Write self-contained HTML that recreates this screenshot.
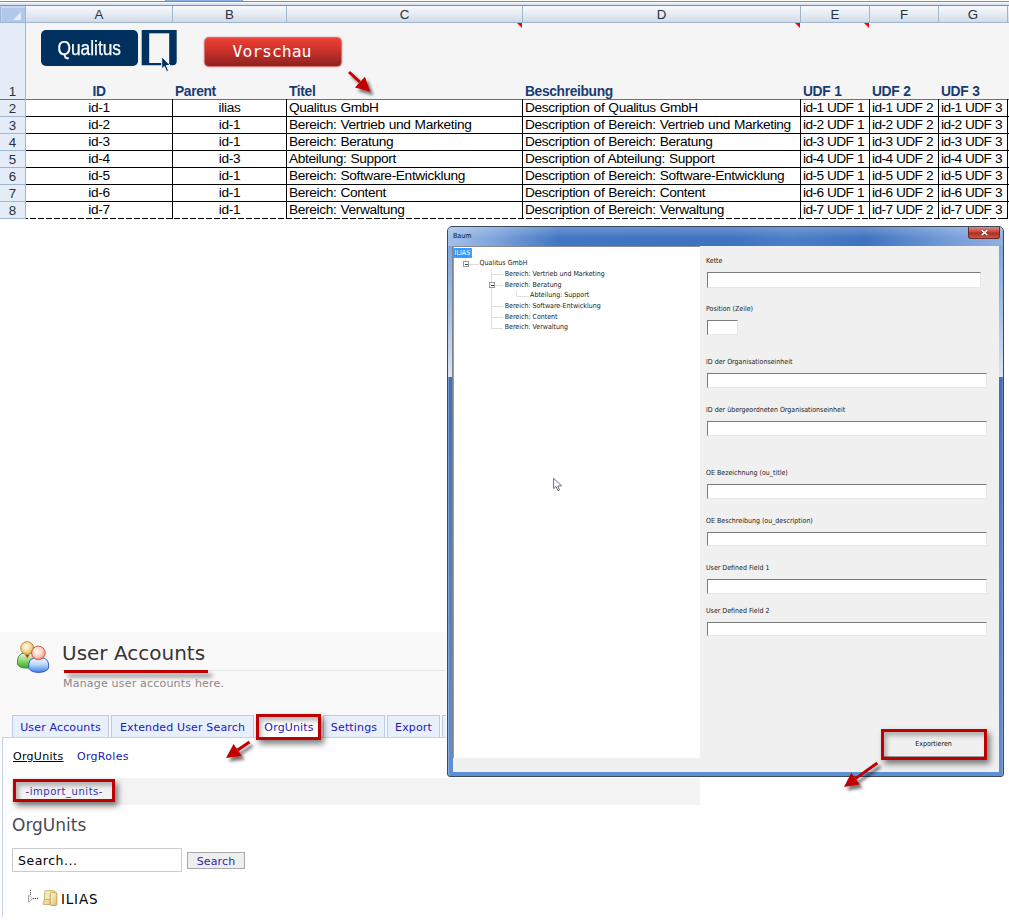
<!DOCTYPE html>
<html lang="de">
<head>
<meta charset="utf-8">
<title>OrgUnits Import</title>
<style>
*{box-sizing:border-box;margin:0;padding:0}
html,body{width:1009px;height:922px;overflow:hidden;background:#fff}
body{position:relative;font-family:"Liberation Sans",sans-serif;font-size:14px;color:#000}
.abs{position:absolute}
svg{display:block;overflow:visible}
/* ---------- spreadsheet ---------- */
#sheet{position:absolute;left:0;top:0;width:1009px;height:222px}
#topstrip{position:absolute;left:0;top:0;width:1009px;height:6px;background:linear-gradient(#fff 0 1px,#6a8cb8 1px 2px,#fff 2px 3px,#d6e6f8 3px 5px,#7391bb 5px 6px)}
#topstrip i{position:absolute;left:165px;top:0;width:78px;height:1px;background:#8db0e2;border-left:1px solid #7f9dc4;border-right:1px solid #7f9dc4}
#topstrip b{display:none}
#colhead{position:absolute;left:0;top:6px;width:1009px;height:17px;background:linear-gradient(#f7f9fc,#e6ebf3 50%,#d3dbe9);border-bottom:1px solid #9eb6ce}
.ch{position:absolute;top:0;height:16px;border-right:1px solid #9eb6ce;text-align:center;font-size:13.33px;line-height:17px;color:#27313f}
#corner{position:absolute;left:0;top:6px;width:26px;height:17px;background:#b1c8ea;border-right:1px solid #9eb6ce;border-bottom:1px solid #9eb6ce;border-top:1px solid #c8d8f0;box-shadow:inset 1px 0 0 #9eb6ce,inset 2px 1px 0 #c4d6f1}
#rowhead{position:absolute;left:0;top:23px;width:26px;height:196px;border-bottom:1px solid #9eb6ce;background:#e4ecf7;border-right:1px solid #9eb6ce}
.rh{position:absolute;left:0;width:25px;text-align:center;font-size:13.33px;line-height:15px;color:#27313f}
#r1{position:absolute;left:26px;top:23px;width:983px;height:76px;background:#f5f5f5}
.hd{position:absolute;top:83.5px;font-weight:bold;font-size:13.8px;letter-spacing:-0.35px;word-spacing:.5px;line-height:16px;color:#1a3a72;white-space:nowrap}
.cell{position:absolute;height:16px;font-size:13.7px;letter-spacing:-0.35px;word-spacing:.55px;line-height:15px;white-space:nowrap;overflow:hidden;background:#fff}
.hl{position:absolute;left:26px;width:983px;height:1px;background:#000}
.dl{position:absolute;left:26px;width:982px;height:1px;background:repeating-linear-gradient(90deg,#000 0 6px,transparent 6px 8px);background-position:-4px 0}
.vl{position:absolute;top:99px;width:1px;height:120px;background:#000}
#qlogo{position:absolute;left:41px;top:30px;width:97px;height:36px;background:#00305e;border-radius:5px;color:#fff;font-size:20.3px;line-height:36px;text-align:center;white-space:nowrap}
#qlogo span{display:inline-block;transform:scaleX(.855);transform-origin:50% 50%;margin:0 -8px;-webkit-text-stroke:.25px #fff}
#vbtn{position:absolute;left:204px;top:37px;width:138px;height:30px;border-radius:5px;background:linear-gradient(#e84036 0%,#df392f 22%,#b92c26 62%,#8c2220 100%);border:1px solid rgba(214,128,124,.9);color:#fff;font-family:"DejaVu Sans Mono","Liberation Mono",monospace;font-size:16.4px;line-height:28px;text-align:center;padding-right:2px;box-shadow:0 0 2px rgba(150,50,50,.5)}
/* ---------- ILIAS ---------- */
#il{position:absolute;left:0;top:0;width:1009px;height:922px;font-family:"DejaVu Sans","Liberation Sans",sans-serif}
#ilhead{position:absolute;left:0;top:632px;width:460px;height:106px;background:#f9f9f9}
#iltitle{position:absolute;left:62px;top:640px;font-size:20px;letter-spacing:0;line-height:26px;color:#3a3434;white-space:nowrap}
#ilhr{position:absolute;left:62px;top:670px;width:400px;height:1px;background:#e4e4e4}
#ilul{position:absolute;left:64px;top:670px;width:144px;height:3px;background:#c00000;box-shadow:4px 4px 4px rgba(0,0,0,.5)}
#ildesc{position:absolute;left:63px;top:677px;font-size:11px;letter-spacing:.2px;line-height:13px;color:#8c8686;white-space:nowrap}
.tab{position:absolute;top:715px;height:23px;background:#e9f0fd;border:1px solid #bccbea;border-bottom:none;color:#2020b0;font-size:11px;letter-spacing:.15px;line-height:23px;text-align:center;white-space:nowrap}
#ilpanel{position:absolute;left:2px;top:737px;width:460px;height:180px;background:#fff;border-top:1px solid #c5d0ea;border-left:1px solid #c5d0ea}
#ilband{position:absolute;left:12px;top:778px;width:688px;height:27px;background:#f3f3f3}
.sub{position:absolute;top:750px;font-size:11px;letter-spacing:.3px;line-height:14px;color:#2020b0;white-space:nowrap}
#imp{position:absolute;left:25.5px;top:785px;font-size:10px;letter-spacing:.55px;line-height:13px;color:#3030b0;white-space:nowrap}
#h2{position:absolute;left:12px;top:815px;font-size:17px;line-height:20px;color:#4a4a55;white-space:nowrap}
#sinp{position:absolute;left:12px;top:848px;width:170px;height:24px;border:1px solid #ccc;background:#fff;font-size:12.5px;letter-spacing:.5px;line-height:23px;padding-left:5px;color:#000;white-space:nowrap}
#sbtn{position:absolute;left:187px;top:852px;width:58px;height:17px;padding-top:1px;border:1px solid #aaa;background:#eee;font-size:11px;letter-spacing:.15px;line-height:15px;color:#2a2ab0;text-align:center}
#iltree{position:absolute;left:61px;top:891px;font-size:13.5px;letter-spacing:.8px;line-height:17px;color:#000;white-space:nowrap}
.rbox{position:absolute;border:3px solid #c00000;box-shadow:3px 4px 6px rgba(0,0,0,.5),inset 3px 4px 4px rgba(0,0,0,.26)}
/* ---------- dialog ---------- */
#dlg{position:absolute;left:447px;top:226px;width:557px;height:551px;border-radius:5px 5px 3px 3px;background:linear-gradient(#3f70be 150px,#5f8fd4);border:1px solid #3c4a60;box-shadow:inset 1px 0 0 rgba(255,255,255,.28),inset -1px 0 0 rgba(255,255,255,.2),0 0 0 1px rgba(255,255,255,.95);font-family:"DejaVu Sans Condensed","DejaVu Sans",sans-serif}
#dlgbar{position:absolute;left:0;top:0;width:555px;height:19px;border-radius:4px 4px 0 0;background:linear-gradient(rgba(255,255,255,.22),rgba(255,255,255,0) 60%),linear-gradient(90deg,#a3c0e8,#7fa5dc 8%,#4176c3 20%,#3f72bf 50%,#4c7ec7 62%,#3f72bf 75%,#5a88cc 83%,#7aa0d8 92%,#8db0e0)}
.dlgs{position:absolute;top:19px;width:5px;height:131px;background:linear-gradient(#7fa6df,#a8c4ea 55%,#d9e5f6)}
#dlgtitle{position:absolute;left:5px;top:3.4px;font-size:7px;line-height:12px;color:#111}
#dlgclose{position:absolute;left:520px;top:0;width:32px;height:12px;border-radius:0 0 3px 3px;background:linear-gradient(#d98a80,#c8463a 45%,#b02c20 55%,#c8564a);border:1px solid #6a2a28;border-top:none;display:flex;align-items:center;justify-content:center}
#dlgbody{position:absolute;left:5px;top:19px;width:546px;height:526px;background:#f0f0f0}
#tree{position:absolute;left:0;top:0;width:247px;height:512px;background:#fff;border-left:1px solid #9c9c9c;border-top:1px solid #8a8a8a;box-shadow:-1px 0 0 #7f8388}
.ti{position:absolute;font-size:7px;line-height:11px;white-space:nowrap;color:#222}
.ti.sel{background:#3399ff;color:#fff;outline:1px dotted #b87;outline-offset:-1px;padding:0 2px 0 1.5px;line-height:10px;margin-top:.3px}
.fl{position:absolute;left:253px;font-size:7px;line-height:11px;white-space:nowrap;color:#222}
.fi{position:absolute;background:#fff;border-top:1px solid #7a7a7a;border-left:1px solid #7a7a7a;border-right:1px solid #e8e8e8;border-bottom:1px solid #e8e8e8}
#expbtn{position:absolute;left:430px;top:486px;width:102px;height:25px;font-size:7px;line-height:25px;text-align:center;color:#111;border-right:1px solid #999;border-bottom:1px solid #999}

.cell.n{letter-spacing:-.6px;word-spacing:.4px}

</style>
</head>
<body>
<svg width="0" height="0" style="position:absolute"><defs>
<filter id="ash" x="-50%" y="-50%" width="200%" height="200%"><feDropShadow dx="3" dy="3.5" stdDeviation="1.6" flood-color="#000" flood-opacity="0.55"/></filter>
</defs></svg>
<div id="sheet">
<div id="topstrip"><i></i><b></b></div>
<div id="colhead">
<div class="ch" style="left:26px;width:147px">A</div>
<div class="ch" style="left:173px;width:114px">B</div>
<div class="ch" style="left:287px;width:236px">C</div>
<div class="ch" style="left:523px;width:278px">D</div>
<div class="ch" style="left:801px;width:69px">E</div>
<div class="ch" style="left:870px;width:69px">F</div>
<div class="ch" style="left:939px;width:69px">G</div>
</div>
<div id="corner"><svg width="25" height="15" viewBox="0 0 25 15"><polygon points="21,5 21,13 13,13" fill="#e6ecf5"/></svg></div>
<div id="r1"></div>
<div id="rowhead">
<div class="rh" style="top:60.5px">1</div>
<div class="rh" style="top:76px;height:17px;line-height:17px;border-top:1px solid #707070">2</div>
<div class="rh" style="top:93px;height:17px;line-height:17px;border-top:1px solid #9eb6ce">3</div>
<div class="rh" style="top:110px;height:17px;line-height:17px;border-top:1px solid #9eb6ce">4</div>
<div class="rh" style="top:127px;height:17px;line-height:17px;border-top:1px solid #9eb6ce">5</div>
<div class="rh" style="top:144px;height:17px;line-height:17px;border-top:1px solid #9eb6ce">6</div>
<div class="rh" style="top:161px;height:17px;line-height:17px;border-top:1px solid #9eb6ce">7</div>
<div class="rh" style="top:178px;height:17px;line-height:17px;border-top:1px solid #9eb6ce">8</div>
</div>
<div class="hd" style="left:26px;width:146px;text-align:center">ID</div>
<div class="hd" style="left:175px">Parent</div>
<div class="hd" style="left:289px">Titel</div>
<div class="hd" style="left:525px">Beschreibung</div>
<div class="hd" style="left:803px">UDF 1</div>
<div class="hd" style="left:872px">UDF 2</div>
<div class="hd" style="left:941px">UDF 3</div>
<svg class="abs" style="left:517px;top:23px" width="5" height="5"><polygon points="0,0 5,0 5,5" fill="#ff0000"/></svg>
<svg class="abs" style="left:795px;top:23px" width="5" height="5"><polygon points="0,0 5,0 5,5" fill="#ff0000"/></svg>
<svg class="abs" style="left:864px;top:23px" width="5" height="5"><polygon points="0,0 5,0 5,5" fill="#ff0000"/></svg>
<div class="cell" style="left:26px;top:100px;width:146px;text-align:center;padding-left:0px">id-1</div>
<div class="cell" style="left:173px;top:100px;width:113px;text-align:center;padding-left:0px">ilias</div>
<div class="cell" style="left:287px;top:100px;width:235px;text-align:left;padding-left:2px">Qualitus GmbH</div>
<div class="cell" style="left:523px;top:100px;width:277px;text-align:left;padding-left:2px">Description of Qualitus GmbH</div>
<div class="cell n" style="left:801px;top:100px;width:68px;text-align:left;padding-left:2px">id-1 UDF 1</div>
<div class="cell n" style="left:870px;top:100px;width:68px;text-align:left;padding-left:2px">id-1 UDF 2</div>
<div class="cell n" style="left:939px;top:100px;width:68px;text-align:left;padding-left:2px">id-1 UDF 3</div>
<div class="cell" style="left:26px;top:117px;width:146px;text-align:center;padding-left:0px">id-2</div>
<div class="cell" style="left:173px;top:117px;width:113px;text-align:center;padding-left:0px">id-1</div>
<div class="cell" style="left:287px;top:117px;width:235px;text-align:left;padding-left:2px">Bereich: Vertrieb und Marketing</div>
<div class="cell" style="left:523px;top:117px;width:277px;text-align:left;padding-left:2px">Description of Bereich: Vertrieb und Marketing</div>
<div class="cell n" style="left:801px;top:117px;width:68px;text-align:left;padding-left:2px">id-2 UDF 1</div>
<div class="cell n" style="left:870px;top:117px;width:68px;text-align:left;padding-left:2px">id-2 UDF 2</div>
<div class="cell n" style="left:939px;top:117px;width:68px;text-align:left;padding-left:2px">id-2 UDF 3</div>
<div class="cell" style="left:26px;top:134px;width:146px;text-align:center;padding-left:0px">id-3</div>
<div class="cell" style="left:173px;top:134px;width:113px;text-align:center;padding-left:0px">id-1</div>
<div class="cell" style="left:287px;top:134px;width:235px;text-align:left;padding-left:2px">Bereich: Beratung</div>
<div class="cell" style="left:523px;top:134px;width:277px;text-align:left;padding-left:2px">Description of Bereich: Beratung</div>
<div class="cell n" style="left:801px;top:134px;width:68px;text-align:left;padding-left:2px">id-3 UDF 1</div>
<div class="cell n" style="left:870px;top:134px;width:68px;text-align:left;padding-left:2px">id-3 UDF 2</div>
<div class="cell n" style="left:939px;top:134px;width:68px;text-align:left;padding-left:2px">id-3 UDF 3</div>
<div class="cell" style="left:26px;top:151px;width:146px;text-align:center;padding-left:0px">id-4</div>
<div class="cell" style="left:173px;top:151px;width:113px;text-align:center;padding-left:0px">id-3</div>
<div class="cell" style="left:287px;top:151px;width:235px;text-align:left;padding-left:2px">Abteilung: Support</div>
<div class="cell" style="left:523px;top:151px;width:277px;text-align:left;padding-left:2px">Description of Abteilung: Support</div>
<div class="cell n" style="left:801px;top:151px;width:68px;text-align:left;padding-left:2px">id-4 UDF 1</div>
<div class="cell n" style="left:870px;top:151px;width:68px;text-align:left;padding-left:2px">id-4 UDF 2</div>
<div class="cell n" style="left:939px;top:151px;width:68px;text-align:left;padding-left:2px">id-4 UDF 3</div>
<div class="cell" style="left:26px;top:168px;width:146px;text-align:center;padding-left:0px">id-5</div>
<div class="cell" style="left:173px;top:168px;width:113px;text-align:center;padding-left:0px">id-1</div>
<div class="cell" style="left:287px;top:168px;width:235px;text-align:left;padding-left:2px">Bereich: Software-Entwicklung</div>
<div class="cell" style="left:523px;top:168px;width:277px;text-align:left;padding-left:2px">Description of Bereich: Software-Entwicklung</div>
<div class="cell n" style="left:801px;top:168px;width:68px;text-align:left;padding-left:2px">id-5 UDF 1</div>
<div class="cell n" style="left:870px;top:168px;width:68px;text-align:left;padding-left:2px">id-5 UDF 2</div>
<div class="cell n" style="left:939px;top:168px;width:68px;text-align:left;padding-left:2px">id-5 UDF 3</div>
<div class="cell" style="left:26px;top:185px;width:146px;text-align:center;padding-left:0px">id-6</div>
<div class="cell" style="left:173px;top:185px;width:113px;text-align:center;padding-left:0px">id-1</div>
<div class="cell" style="left:287px;top:185px;width:235px;text-align:left;padding-left:2px">Bereich: Content</div>
<div class="cell" style="left:523px;top:185px;width:277px;text-align:left;padding-left:2px">Description of Bereich: Content</div>
<div class="cell n" style="left:801px;top:185px;width:68px;text-align:left;padding-left:2px">id-6 UDF 1</div>
<div class="cell n" style="left:870px;top:185px;width:68px;text-align:left;padding-left:2px">id-6 UDF 2</div>
<div class="cell n" style="left:939px;top:185px;width:68px;text-align:left;padding-left:2px">id-6 UDF 3</div>
<div class="cell" style="left:26px;top:202px;width:146px;text-align:center;padding-left:0px">id-7</div>
<div class="cell" style="left:173px;top:202px;width:113px;text-align:center;padding-left:0px">id-1</div>
<div class="cell" style="left:287px;top:202px;width:235px;text-align:left;padding-left:2px">Bereich: Verwaltung</div>
<div class="cell" style="left:523px;top:202px;width:277px;text-align:left;padding-left:2px">Description of Bereich: Verwaltung</div>
<div class="cell n" style="left:801px;top:202px;width:68px;text-align:left;padding-left:2px">id-7 UDF 1</div>
<div class="cell n" style="left:870px;top:202px;width:68px;text-align:left;padding-left:2px">id-7 UDF 2</div>
<div class="cell n" style="left:939px;top:202px;width:68px;text-align:left;padding-left:2px">id-7 UDF 3</div>
<div class="hl" style="top:99px;background:#707070"></div>
<div class="hl" style="top:116px"></div>
<div class="hl" style="top:133px"></div>
<div class="hl" style="top:150px"></div>
<div class="hl" style="top:167px"></div>
<div class="hl" style="top:184px"></div>
<div class="hl" style="top:201px"></div>
<div class="dl" style="top:218px"></div>
<div class="vl" style="left:172px"></div>
<div class="vl" style="left:286px"></div>
<div class="vl" style="left:522px"></div>
<div class="vl" style="left:800px"></div>
<div class="vl" style="left:869px"></div>
<div class="vl" style="left:938px"></div>
<div class="vl" style="left:1007px"></div>
<div id="qlogo"><span>Qualitus</span></div>
<svg id="qicon" class="abs" style="left:140px;top:28px" width="40" height="46" viewBox="0 0 40 46">
<path d="M1.7 2 H36.7 V33.3 Q36.7 37.3 32.7 37.3 H1.7 Z" fill="#00305e"/>
<path d="M9.2 5.3 H29.2 V35 H9.2 Z" fill="#f5f5f5"/>
<path d="M21.7 28.7 L21.7 41 L24.4 38.4 L26.6 43.6 L28.6 42.7 L26.4 37.6 L30.2 37.4 Z" fill="#00305e" stroke="#f5f5f5" stroke-width="1"/>
</svg>
<div id="vbtn">Vorschau</div>
<svg class="abs arrow" style="left:332.7px;top:55.599999999999994px" width="53.400000000000034" height="51.650000000000006"><g filter="url(#ash)"><line x1="16.0" y1="16.0" x2="26.9" y2="26.0" stroke="#c00000" stroke-width="3" stroke-linecap="butt"/><polygon points="37.4,35.7 22.0,31.4 31.9,20.7" fill="#c00000"/></g></svg>
</div>
<div id="il">
<div id="ilhead"></div>
<svg class="abs" style="left:14px;top:638px" width="38" height="38" viewBox="14 638 38 38">
<defs>
<radialGradient id="gO" cx="42%" cy="38%" r="65%"><stop offset="0" stop-color="#fffaf0"/><stop offset="0.55" stop-color="#f8d898"/><stop offset="1" stop-color="#dca048"/></radialGradient>
<radialGradient id="gR" cx="42%" cy="38%" r="65%"><stop offset="0" stop-color="#fffaf8"/><stop offset="0.55" stop-color="#fbd2c6"/><stop offset="1" stop-color="#ee8e78"/></radialGradient>
<linearGradient id="gG" x1="0" y1="0" x2="0" y2="1"><stop offset="0" stop-color="#eefaea"/><stop offset="0.4" stop-color="#a4e08c"/><stop offset="1" stop-color="#38ac1c"/></linearGradient>
<linearGradient id="gB" x1="0" y1="0" x2="0" y2="1"><stop offset="0" stop-color="#f4f8ff"/><stop offset="0.45" stop-color="#bcd8ff"/><stop offset="1" stop-color="#3a7ee6"/></linearGradient>
</defs>
<path d="M17.4 664 Q16.800 654 24 652.800 L31 652.800 Q36 654 35 664 Q33 668 26 668 Q19 668 17.400 664 Z" fill="url(#gG)" stroke="#2e8a22" stroke-width="0.9"/>
<path d="M25.2 655 L27.300 658.200 L29.400 655 Z" fill="#ee1c1c"/>
<circle cx="27.200" cy="648.1" r="6.450" fill="url(#gO)" stroke="#b47a30" stroke-width="0.9"/>
<path d="M28.700 668 Q28 659 34 658 L43 658 Q49.400 659 48.600 668 Q46 672.400 38.600 672.400 Q31 672.400 28.700 668 Z" fill="url(#gB)" stroke="#2a4cc4" stroke-width="0.9"/>
<circle cx="38.400" cy="652.9" r="6.800" fill="url(#gR)" stroke="#d8483a" stroke-width="0.9"/>
</svg>
<div id="iltitle">User Accounts</div>
<div id="ilhr"></div>
<div id="ilul"></div>
<div id="ildesc">Manage user accounts here.</div>
<div class="tab" style="left:12px;width:97px">User Accounts</div>
<div class="tab" style="left:111px;width:143px">Extended User Search</div>
<div class="tab" style="left:257px;width:64px;background:#fff;height:24px">OrgUnits</div>
<div class="tab" style="left:323px;width:62px">Settings</div>
<div class="tab" style="left:387px;width:53px">Export</div>
<div class="tab" style="left:442px;width:78px"></div>
<div id="ilpanel"></div>
<div id="ilband"></div>
<div class="sub" style="left:13px;color:#000;text-decoration:underline">OrgUnits</div>
<div class="sub" style="left:77px">OrgRoles</div>
<div id="imp">-import_units-</div>
<div id="h2">OrgUnits</div>
<div id="sinp">Search...</div>
<div id="sbtn">Search</div>
<svg class="abs" style="left:26px;top:888px" width="34" height="20" viewBox="26 888 34 20">
<defs><linearGradient id="gF" x1="0" y1="0" x2="1" y2="1"><stop offset="0" stop-color="#fbf4d8"/><stop offset="0.5" stop-color="#efdfa4"/><stop offset="1" stop-color="#d4b660"/></linearGradient></defs>
<path d="M30.500 890 V896" stroke="#333" stroke-width="1" stroke-dasharray="1 1"/>
<path d="M33 898.500 H38" stroke="#333" stroke-width="1" stroke-dasharray="1 1"/>
<path d="M28.500 895 L32.500 898.700 L28.500 902.500 Z" fill="#fff" stroke="#aaa" stroke-width="1"/>
<rect x="44.500" y="890.500" width="10.500" height="13.500" rx="2" fill="#f3e9c0" stroke="#cfba74" stroke-width="1"/>
<path d="M43 903.500 L44.200 899.500 L50 899.500 L50 904.500 L44 904.500 Q42.700 904.500 43 903.500 Z" fill="#ead89c" stroke="#c4a85c" stroke-width="0.8"/>
<rect x="50.200" y="892.300" width="6.600" height="13.200" rx="1.600" fill="url(#gF)" stroke="#c4a558" stroke-width="1"/>
</svg>
<div id="iltree">ILIAS</div>
<div class="rbox" style="left:256px;top:714px;width:65px;height:26px"></div>
<div class="rbox" style="left:13px;top:779px;width:102px;height:23px"></div>
<svg class="abs arrow" style="left:210px;top:726.4px" width="55.5" height="48.10000000000002"><g filter="url(#ash)"><line x1="39.5" y1="16.0" x2="27.7" y2="24.1" stroke="#c00000" stroke-width="3" stroke-linecap="butt"/><polygon points="16.0,32.1 23.6,18.1 31.8,30.1" fill="#c00000"/></g></svg>
</div>
<div id="dlg">
<div id="dlgbar"></div><div class="dlgs" style="left:0"></div><div class="dlgs" style="left:551px;width:4px"></div>
<div id="dlgtitle">Baum</div>
<div id="dlgclose"><svg width="9" height="7.400" viewBox="0 0 11 9"><path d="M2 1.5 L9 7.5 M9 1.5 L2 7.5" stroke="#5a2020" stroke-width="3.4" stroke-linecap="butt"/><path d="M2 1.5 L9 7.5 M9 1.5 L2 7.5" stroke="#fff" stroke-width="2" stroke-linecap="butt"/></svg></div>
<div id="dlgbody">
<div id="tree">
<div class="ti sel" style="left:-0.9px;top:0.5px">ILIAS</div>
<div class="ti" style="left:25.6px;top:11.2px">Qualitus GmbH</div>
<div class="ti" style="left:50.7px;top:21.9px">Bereich: Vertrieb und Marketing</div>
<div class="ti" style="left:50.7px;top:32.6px">Bereich: Beratung</div>
<div class="ti" style="left:76.1px;top:43.3px">Abteilung: Support</div>
<div class="ti" style="left:50.7px;top:54.0px">Bereich: Software-Entwicklung</div>
<div class="ti" style="left:50.7px;top:64.7px">Bereich: Content</div>
<div class="ti" style="left:50.7px;top:75.4px">Bereich: Verwaltung</div>
<svg class="abs" style="left:-1px;top:-0.5px" width="247" height="100" viewBox="453 246 247 100">
<g stroke="#dedede" stroke-width="1" fill="none">
<path d="M465.5 257 V260"/>
<path d="M469 263.5 H479"/>
<path d="M491.5 268 V327.5 H503"/>
<path d="M491.5 273.5 H503"/>
<path d="M495 284.5 H503"/>
<path d="M516.5 289 V295.5 H529"/>
<path d="M491.5 305.5 H503"/>
<path d="M491.5 316.5 H503"/>
</g>
<g stroke="#9a9a9a" fill="#fff" stroke-width="1">
<rect x="463.5" y="260.5" width="5" height="5"/>
<rect x="489.500" y="281.5" width="5" height="5"/>
</g>
<g stroke="#444" stroke-width="1"><path d="M465 263.5 H468"/><path d="M491 284.5 H494"/></g>
</svg>
</div>
<div class="fl" style="top:10.1px">Kette</div>
<div class="fl" style="top:58.0px">Position (Zeile)</div>
<div class="fl" style="top:110.8px">ID der Organisationseinheit</div>
<div class="fl" style="top:158.8px">ID der übergeordneten Organisationseinheit</div>
<div class="fl" style="top:221.7px">OE Bezeichnung (ou_title)</div>
<div class="fl" style="top:269.5px">OE Beschreibung (ou_description)</div>
<div class="fl" style="top:317.0px">User Defined Field 1</div>
<div class="fl" style="top:359.5px">User Defined Field 2</div>
<div class="fi" style="left:253.6px;top:26.3px;width:274.4px;height:15.3px"></div>
<div class="fi" style="left:253.6px;top:74.0px;width:31.4px;height:15.2px"></div>
<div class="fi" style="left:253.6px;top:127.2px;width:280.4px;height:14.8px"></div>
<div class="fi" style="left:253.6px;top:174.8px;width:280.4px;height:15.0px"></div>
<div class="fi" style="left:253.6px;top:238.2px;width:280.4px;height:14.8px"></div>
<div class="fi" style="left:253.6px;top:285.6px;width:280.4px;height:14.8px"></div>
<div class="fi" style="left:253.6px;top:333.0px;width:280.4px;height:15.0px"></div>
<div class="fi" style="left:253.6px;top:375.6px;width:280.4px;height:14.9px"></div>
<div id="expbtn">Exportieren</div>
</div>
</div>
<svg class="abs" style="left:552px;top:477px" width="12" height="17" viewBox="0 0 12 17"><path d="M1.6 1.3 L1.6 11.7 L4 9.500 L5.900 13.700 L7.500 13 L5.700 9 L9.600 8.800 Z" fill="#fff" stroke="#6a6f84" stroke-width="1" stroke-linejoin="round"/></svg>
<div class="rbox" style="left:881px;top:729px;width:105.500px;height:31px"></div>
<svg class="abs arrow" style="left:827.9px;top:746.5px" width="65.30000000000007" height="55.89999999999998"><g filter="url(#ash)"><line x1="49.3" y1="16.0" x2="27.5" y2="31.6" stroke="#c00000" stroke-width="3" stroke-linecap="butt"/><polygon points="16.0,39.9 23.3,25.7 31.8,37.6" fill="#c00000"/></g></svg>
</body>
</html>
